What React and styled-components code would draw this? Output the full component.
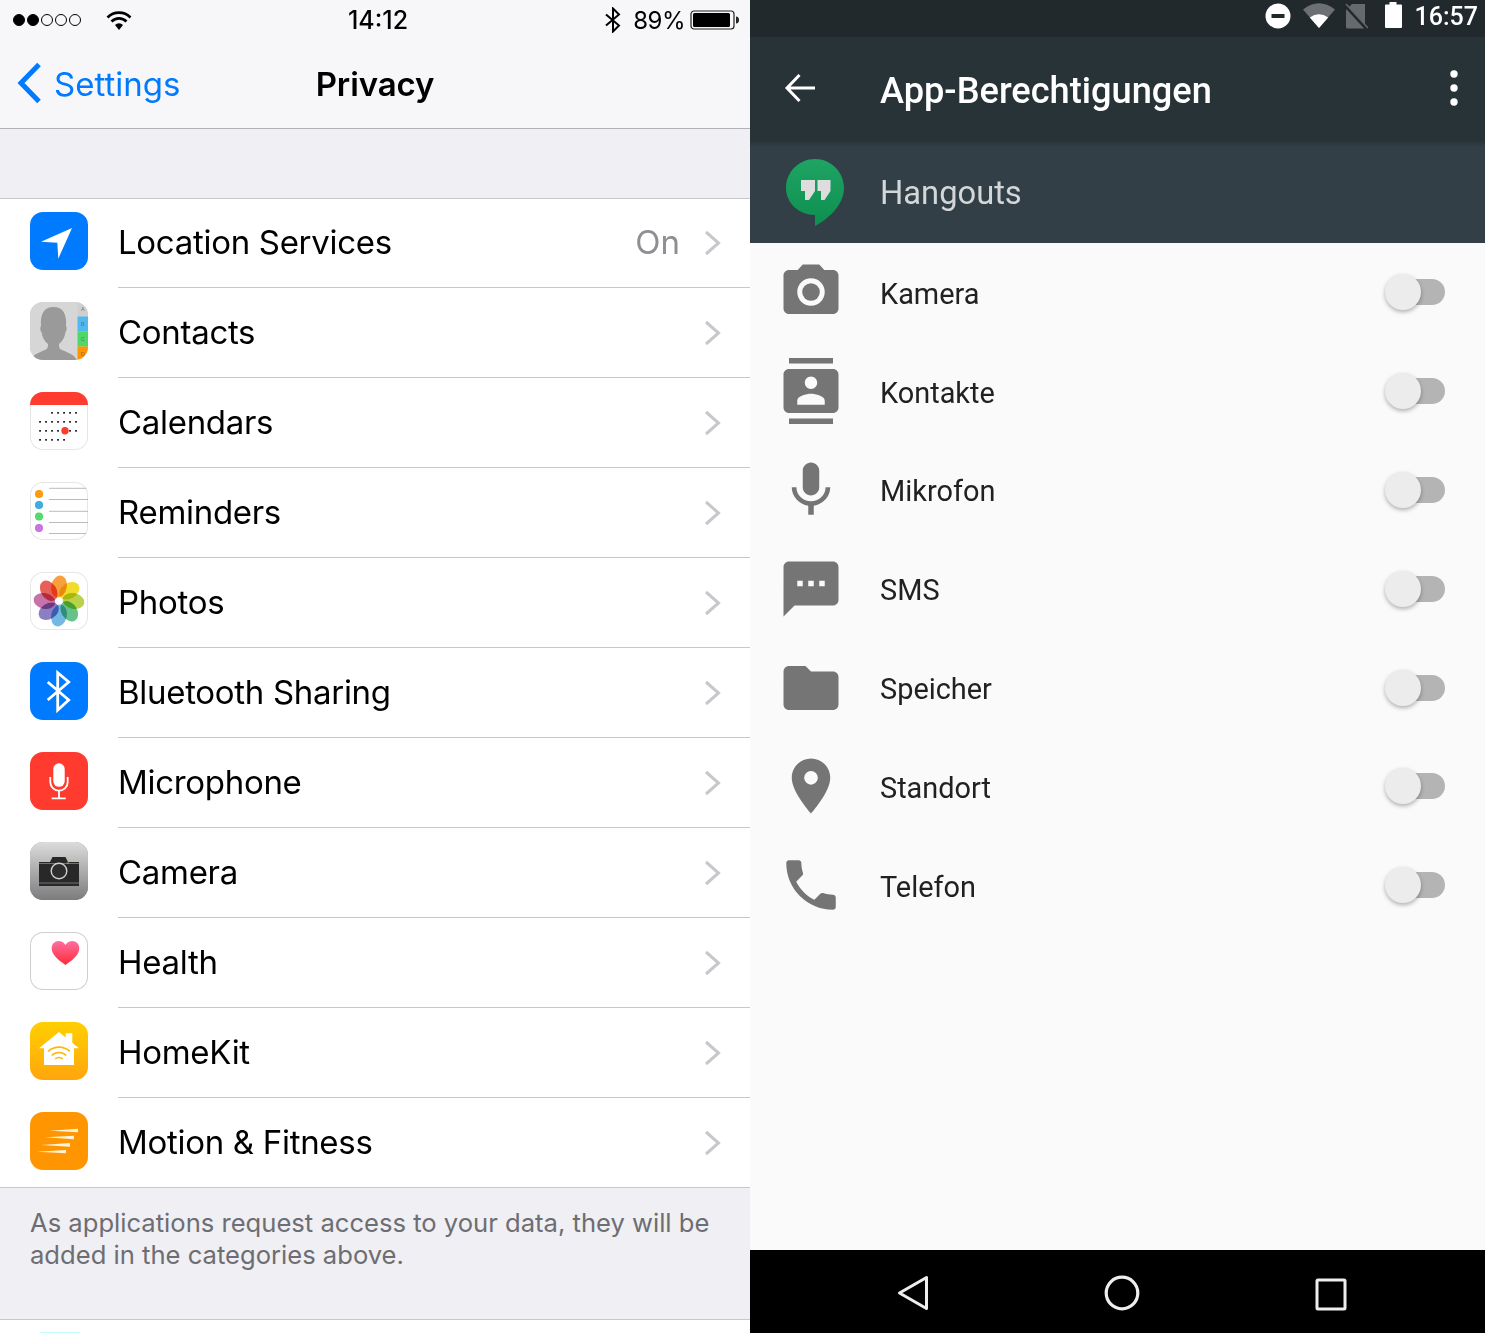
import styled, { createGlobalStyle } from "styled-components";
import { MdPhotoCamera, MdContacts, MdMic, MdSms, MdFolder, MdLocationOn, MdPhone } from "react-icons/md";

const Global = createGlobalStyle`
    html, body { margin: 0; padding: 0; background: #fff; }
    * { box-sizing: border-box; }
`;

const Screen = styled.div`
    display: grid;
    grid-template-columns: 750px 735px;
    grid-template-rows: 1333px;
    width: 1485px;
    height: 1333px;
    overflow: hidden;
`;

/* ---------- iOS side ---------- */

const Ios = styled.section`
    display: flex;
    flex-direction: column;
    min-height: 0;
    overflow: hidden;
    background: #fff;
    color: #000;
    font-family: Inter, "Liberation Sans", sans-serif;
`;

const IosHead = styled.header`
    flex: none;
    height: 129px;
    background: #f7f7f9;
    border-bottom: 1px solid #b2b2b6;
`;

const IosStatus = styled.div`
    display: grid;
    grid-template-columns: 1fr auto 1fr;
    align-items: center;
    height: 40px;
    padding: 0 10px 0 13px;
    font-size: 25px;
    font-weight: 500;
`;

const StatusSide = styled.div`
    display: flex;
    align-items: center;
    justify-content: ${(p) => (p.$end ? "flex-end" : "flex-start")};
    gap: ${(p) => p.$gap || 0}px;
`;

const Clock = styled.span`
    padding-left: 3px;
`;

const Dots = styled.div`
    display: flex;
    gap: 2px;
    margin-right: 25px;
`;

const Dot = styled.span`
    width: 12px;
    height: 12px;
    border-radius: 50%;
    border: 1px solid #000;
    background: ${(p) => (p.$on ? "#000" : "transparent")};
`;

const Percent = styled.span`
    font-size: 24px;
    font-weight: 400;
    letter-spacing: -0.5px;
    margin-left: 6px;
`;

const IosNav = styled.div`
    display: grid;
    grid-template-columns: 1fr auto 1fr;
    align-items: center;
    height: 88px;
    padding: 0 17px;
`;

const Back = styled.div`
    display: flex;
    align-items: center;
    gap: 12px;
    color: #007aff;
    font-size: 33px;
    svg { flex: none; margin-bottom: 2px; }
`;

const NavTitle = styled.div`
    font-size: 33px;
    font-weight: 600;
    letter-spacing: -0.1px;
`;

const Gap = styled.div`
    flex: none;
    height: 69px;
    background: #efeff4;
`;

const List = styled.div`
    flex: none;
    border-top: 1px solid #c8c7cc;
`;

const Row = styled.div`
    display: flex;
    height: 90px;
    &:first-child { height: 89px; }
    &:last-child { height: 89px; }
`;

const Tile = styled.div`
    flex: none;
    width: 58px;
    height: 58px;
    margin: 14px 30px 0;
    border-radius: 13px;
    overflow: hidden;
    background: ${(p) => p.$bg};
    box-shadow: ${(p) => (p.$edge ? `inset 0 0 0 1px ${p.$edge}` : "none")};
    ${Row}:first-child & { margin-top: 13px; }
    svg { display: block; }
`;

const RowBody = styled.div`
    flex: 1;
    display: flex;
    align-items: center;
    padding-right: 29px;
    border-bottom: 1px solid #c8c7cc;
    ${Row}:last-child & { border-bottom: 0; }
`;

const RowLabel = styled.span`
    flex: 1;
    padding-bottom: 2px;
    font-size: 33px;
    letter-spacing: -0.3px;
`;

const RowValue = styled.span`
    padding-bottom: 2px;
    font-size: 33px;
    color: #8e8e93;
    margin-right: 24px;
`;

const Note = styled.footer`
    flex: none;
    height: 133px;
    padding: 19px 30px 0;
    background: #efeff4;
    border-top: 1px solid #c8c7cc;
    border-bottom: 1px solid #c8c7cc;
    color: #6d6d72;
    font-size: 25.600px;
    line-height: 32px;
    white-space: nowrap;
`;

const NextTile = styled.div`
    flex: none;
    width: 40px;
    height: 2px;
    margin: 12px 0 0 40px;
    background: #c4fbfb;
`;

/* iOS tile drawings, all on a 58 unit square */

const T = ({ children, defs }) => (
    <svg width="58" height="58" viewBox="0 0 58 58">
        {defs && <defs>{defs}</defs>}
        {children}
    </svg>
);

const LocationArt = () => (
    <T><polygon points="11,29.7 42,16 28.3,46.7 27.3,30.7" fill="#fff" /></T>
);

const ContactsArt = () => (
    <T>
        <path d="M0 58V0h47.5v58z" fill="#d6d6d6" />
        <path d="M1 58C2 53 8 51 15 48C18 47 18 44 18 42C14 39 12 34 11.500 30C10 29 10 25 11 24C10 12 14 5 23.500 5C33 5 37 12 36 24C37 25 37 29 35.500 30C35 34 33 39 29 42C29 44 29 47 32 48C39 51 45 53 46.500 58z" fill="#9a9a9a" />
        <rect x="47.500" width="11" height="14.500" fill="#cfcfcf" />
        <rect x="47.500" y="14.500" width="11" height="15" fill="#4fb9f0" />
        <rect x="47.500" y="29.500" width="11" height="15" fill="#4cd964" />
        <rect x="47.500" y="44.500" width="11" height="14" fill="#ff9500" />
        {["A", "B", "C", "D"].map((l, i) => (
            <text key={l} x="52.800" y={9 + i * 15} fontSize="5.500" textAnchor="middle" fill="#6f6f6f" fontFamily="Liberation Sans">{l}</text>
        ))}
    </T>
);

const calendarRows = [
    [22, 28, 34, 40, 46],
    [10, 16, 22, 28, 34, 40, 46],
    [10, 16, 22, 28, 40, 46],
    [10, 16, 22, 28, 34],
];

const CalendarArt = () => (
    <T>
        <rect x="0" y="0" width="58" height="13" fill="#ff3b30" />
        {calendarRows.map((xs, r) => xs.map((x) => (
            <rect key={`${r}-${x}`} x={x - 0.8} y={20 + r * 9} width="1.700" height="1.700" fill="#111" />
        )))}
        <circle cx="35" cy="38.700" r="3.700" fill="#ff3b30" />
    </T>
);

const reminderDots = [["#ff9500", 12], ["#34aadc", 23], ["#4cd964", 34.5], ["#c86edf", 46]];

const RemindersArt = () => (
    <T>
        {[6.3, 17.5, 29.3, 40.5, 51.5].map((y) => (
            <line key={y} x1="19" x2="58" y1={y} y2={y} stroke="#a9a9a9" strokeWidth="0.800" />
        ))}
        {reminderDots.map(([c, y]) => (
            <g key={y}>
                <circle cx="9" cy={y} r="4" fill={c} />
                <circle cx="9" cy={y} r="2" fill={c} stroke="#fff" strokeOpacity="0.250" strokeWidth="0.500" />
            </g>
        ))}
    </T>
);

const petals = ["#f9a03c", "#efdc2b", "#b8d24a", "#66c28a", "#73b9e3", "#8a7fc2", "#c573a8", "#e85f5a"];

const PhotosArt = () => (
    <T>
        <g style={{ isolation: "isolate" }}>
            {petals.map((c, i) => (
                <ellipse
                    key={c}
                    cx="29"
                    cy="14.500"
                    rx="7.800"
                    ry="11"
                    fill={c}
                    transform={`rotate(${i * 45} 29 29) rotate(${12} 29 14.500)`}
                    style={{ mixBlendMode: "multiply" }}
                />
            ))}
        </g>
        <circle cx="29" cy="29" r="1.300" fill="#fff" />
    </T>
);

const BluetoothArt = () => (
    <T>
        <path d="M17.700 20L38.700 38L27.700 48V10.700L38.700 20L17.700 38" fill="none" stroke="#fff" strokeWidth="2.800" />
    </T>
);

const MicArt = () => (
    <T>
        <rect x="23.300" y="11.300" width="11.400" height="23.500" rx="5.700" fill="#fff" />
        <path d="M20.300 25v5a8.700 8.700 0 0 0 17.400 0v-5" fill="none" stroke="#fff" strokeWidth="1.800" />
        <path d="M29 38.500V46M21.700 46.300h14" fill="none" stroke="#fff" strokeWidth="1.800" />
    </T>
);

const CameraArt = () => (
    <T defs={
        <linearGradient id="camBg" x1="0" x2="0" y1="0" y2="1">
            <stop offset="0" stopColor="#dcdcdc" />
            <stop offset="1" stopColor="#7c7c7e" />
        </linearGradient>
    }>
        <rect width="58" height="58" fill="url(#camBg)" />
        <path d="M9 20h11l2.500-5h13l2.500 5h11v24H9z" fill="#282828" />
        <path d="M9 21.500h40M9 41h40" stroke="#bcbcbc" strokeWidth="0.500" />
        <circle cx="29" cy="29" r="7.800" fill="#2d2d2d" stroke="#d0d0d0" strokeWidth="1.400" />
        <circle cx="38" cy="21" r="0.800" fill="#e0b040" />
    </T>
);

const HealthArt = () => (
    <T defs={
        <linearGradient id="heart" x1="0" x2="0" y1="0" y2="1">
            <stop offset="0" stopColor="#ff70a0" />
            <stop offset="1" stopColor="#ff2a3a" />
        </linearGradient>
    }>
        <path d="M35.500 33C26 26.500 21.700 22 21.700 16.300 21.700 12 25 9 28.500 9c3 0 5.500 1.500 7 4 1.500-2.500 4-4 7-4 3.500 0 6.800 3 6.800 7.300C49.300 22 45 26.500 35.500 33z" fill="url(#heart)" />
    </T>
);

const HomeArt = () => (
    <T>
        <path d="M9 26.300L29 10l6.700 5.400V11.300h6.600v9.500L49 26.300H44V43H14V26.300z" fill="#fff" />
        <path d="M18 29.500a16 16 0 0 1 22 0M21.700 33.500a10.500 10.500 0 0 1 14.600 0M25.200 37a5.400 5.400 0 0 1 7.600 0" fill="none" stroke="#ffb80a" strokeWidth="1.600" />
    </T>
);

const MotionArt = () => (
    <T>
        <polygon points="19.300,18.700 48,16.700 48,20.300" fill="#fff3d8" />
        <polygon points="15,25.300 44,23.700 44,27.300" fill="#fff3d8" />
        <polygon points="11,33 40,31 40,34.700" fill="#fff3d8" />
        <polygon points="6.700,39.700 36,38 36,41.300" fill="#fff3d8" />
    </T>
);

const iosRows = [
    { label: "Location Services", value: "On", bg: "#007aff", art: <LocationArt /> },
    { label: "Contacts", bg: "#d6d6d6", art: <ContactsArt /> },
    { label: "Calendars", bg: "#fff", edge: "#e6e6e6", art: <CalendarArt /> },
    { label: "Reminders", bg: "#fff", edge: "#e6e6e6", art: <RemindersArt /> },
    { label: "Photos", bg: "#fff", edge: "#e6e6e6", art: <PhotosArt /> },
    { label: "Bluetooth Sharing", bg: "#007aff", art: <BluetoothArt /> },
    { label: "Microphone", bg: "#ff3b30", art: <MicArt /> },
    { label: "Camera", bg: "#999", art: <CameraArt /> },
    { label: "Health", bg: "#fff", edge: "#cfcfd2", art: <HealthArt /> },
    { label: "HomeKit", bg: "linear-gradient(#ffcf00, #ffa60d)", art: <HomeArt /> },
    { label: "Motion & Fitness", bg: "#ff9500", art: <MotionArt /> },
];

const Chevron = () => (
    <svg width="17" height="26" viewBox="0 0 17 26">
        <path d="M2 2l12.500 11L2 24" fill="none" stroke="#c7c7cc" strokeWidth="3" />
    </svg>
);

/* ---------- Android side ---------- */

const Droid = styled.section`
    display: flex;
    flex-direction: column;
    min-height: 0;
    background: #fafafa;
    font-family: Roboto, "Liberation Sans", sans-serif;
`;

const DroidStatus = styled.div`
    display: flex;
    align-items: flex-start;
    justify-content: flex-end;
    flex: none;
    height: 37px;
    padding: 2px 7px 0 0;
    background: #22292d;
    color: #fff;
    font-size: 25px;
    font-weight: 500;
    line-height: 28px;
    svg { display: block; flex: none; }
`;

const StatusTime = styled.span`
    padding-top: 1px;
`;

const StatusIcon = styled.span`
    margin-right: ${(p) => p.$gap}px;
    margin-top: ${(p) => p.$top || 0}px;
`;

const Toolbar = styled.div`
    position: relative;
    display: flex;
    align-items: center;
    flex: none;
    height: 104px;
    padding: 0 26px 2px 34px;
    background: #283338;
    color: #fff;
    z-index: 1;
    &::after {
        content: "";
        position: absolute;
        left: 0;
        right: 0;
        top: 100%;
        height: 6px;
        background: linear-gradient(rgba(34, 43, 48, 0.6), rgba(34, 43, 48, 0));
    }
`;

const ToolbarTitle = styled.h1`
    flex: 1;
    margin: 5px 0 0 64px;
    font-size: 36.200px;
    font-weight: 500;
`;

const AppBand = styled.div`
    display: flex;
    align-items: center;
    flex: none;
    height: 102px;
    padding: 0 0 0 36px;
    background: #323f47;
`;

const AppName = styled.span`
    margin-left: 36px;
    padding-top: 2px;
    color: #d4d7d9;
    font-size: 32.700px;
`;

const Perms = styled.div`
    flex: 1;
`;

const Perm = styled.div`
    display: flex;
    align-items: center;
    height: 98.800px;
    padding: 0 40px 0 28px;
`;

const PermIcon = styled.span`
    flex: none;
    display: flex;
    width: 102px;
    color: #757575;
`;

const PermLabel = styled.span`
    flex: 1;
    color: #212121;
    font-size: 28.900px;
    padding-top: 3px;
`;

const Toggle = styled.span`
    position: relative;
    display: block;
    width: 60px;
    height: 36px;
    &::before {
        content: "";
        position: absolute;
        left: 7px;
        right: 0;
        top: 5px;
        height: 26px;
        border-radius: 13px;
        background: #b4b4b4;
    }
    &::after {
        content: "";
        position: absolute;
        left: 0;
        top: 0;
        width: 36px;
        height: 36px;
        border-radius: 50%;
        background: #ececec;
        box-shadow: 0 2px 4px rgba(0, 0, 0, 0.3);
    }
`;

const BottomBar = styled.nav`
    display: flex;
    align-items: flex-start;
    flex: none;
    height: 83px;
    padding: 25px 0 0 147px;
    background: #000;
    svg { display: block; flex: none; }
`;

const BarKey = styled.span`
    margin-right: ${(p) => p.$gap}px;
`;

const HangoutsLogo = () => (
    <svg width="58" height="67" viewBox="0 0 58 67">
        <defs>
            <linearGradient id="hang" x1="0" x2="0" y1="0" y2="1">
                <stop offset="0" stopColor="#1fa463" />
                <stop offset="1" stopColor="#0d8f4f" />
            </linearGradient>
        </defs>
        <path d="M29 0C13 0 0 13 0 29C0 44 13 56 29 56V67C44 59 58 45 58 29C58 13 45 0 29 0z" fill="url(#hang)" />
        <path d="M15 21h14v11l-6 9h-4v-9h-4zM31.500 21h13v11l-6 9h-3.500v-9h-3.500z" fill="#dddddd" />
    </svg>
);

const perms = [
    { label: "Kamera", Icon: MdPhotoCamera },
    { label: "Kontakte", Icon: MdContacts },
    { label: "Mikrofon", Icon: MdMic },
    { label: "SMS", Icon: MdSms },
    { label: "Speicher", Icon: MdFolder },
    { label: "Standort", Icon: MdLocationOn },
    { label: "Telefon", Icon: MdPhone },
];

export default function App() {
    return (
        <Screen>
            <Global />
            <Ios>
                <IosHead>
                    <IosStatus>
                        <StatusSide>
                            <Dots>
                                {[1, 1, 0, 0, 0].map((on, i) => <Dot key={i} $on={on} />)}
                            </Dots>
                            <svg width="26" height="20" viewBox="0 0 26 20">
                                <path d="M1.500 7.500a16 16 0 0 1 23 0M5.500 11.500a10.500 10.500 0 0 1 15 0" fill="none" stroke="#000" strokeWidth="2.600" />
                                <path d="M9 15a5.500 5.500 0 0 1 8 0l-4 5z" fill="#000" />
                            </svg>
                        </StatusSide>
                        <Clock>14:12</Clock>
                        <StatusSide $end $gap={5}>
                            <svg width="18" height="26" viewBox="0 0 18 26">
                                <path d="M2 7.500L15 18.500L9 24.500V1.500L15 7.500L2 18.500" fill="none" stroke="#000" strokeWidth="2" />
                            </svg>
                            <Percent>89%</Percent>
                            <svg width="50" height="20" viewBox="0 0 50 20">
                                <rect x="1" y="1" width="43" height="18" rx="3" fill="none" stroke="#222" strokeWidth="1.200" />
                                <rect x="3" y="3" width="37" height="14" rx="1.500" fill="#000" />
                                <path d="M46 6.500c2 0 3 1.500 3 3.500s-1 3.500-3 3.500z" fill="#222" />
                            </svg>
                        </StatusSide>
                    </IosStatus>
                    <IosNav>
                        <Back>
                            <svg width="25" height="42" viewBox="0 0 25 42">
                                <path d="M22 2.500L4 21l18 18.500" fill="none" stroke="#007aff" strokeWidth="5" />
                            </svg>
                            Settings
                        </Back>
                        <NavTitle>Privacy</NavTitle>
                    </IosNav>
                </IosHead>
                <Gap />
                <List>
                    {iosRows.map((r) => (
                        <Row key={r.label}>
                            <Tile $bg={r.bg} $edge={r.edge}>{r.art}</Tile>
                            <RowBody>
                                <RowLabel>{r.label}</RowLabel>
                                {r.value && <RowValue>{r.value}</RowValue>}
                                <Chevron />
                            </RowBody>
                        </Row>
                    ))}
                </List>
                <Note>
                    As applications request access to your data, they will be<br />
                    added in the categories above.
                </Note>
                <NextTile />
            </Ios>
            <Droid>
                <DroidStatus>
                    <StatusIcon $gap={12} $top={1}>
                        <svg width="26" height="26" viewBox="0 0 26 26">
                            <circle cx="13" cy="13" r="12.500" fill="#fff" />
                            <rect x="6.500" y="11" width="13" height="4" fill="#22292d" />
                        </svg>
                    </StatusIcon>
                    <StatusIcon $gap={9}>
                        <svg width="32" height="26" viewBox="0 0 32 26">
                            <path d="M0 7.500Q16-5 32 7.500L16 26z" fill="#6c7073" />
                            <path d="M6.800 15.500Q16 9 25.200 15.500L16 26z" fill="#fff" />
                        </svg>
                    </StatusIcon>
                    <StatusIcon $gap={16} $top={2}>
                        <svg width="24" height="25" viewBox="0 0 24 25">
                            <path d="M8 0h13v23a1.500 1.500 0 0 1-1.500 1.500h-16A1.500 1.500 0 0 1 2 23V6z" fill="#646a6e" />
                            <path d="M1 1l21 23" stroke="#22292d" strokeWidth="3.500" />
                            <path d="M2 0l22 24" stroke="#646a6e" strokeWidth="1.500" />
                        </svg>
                    </StatusIcon>
                    <StatusIcon $gap={12}>
                        <svg width="19" height="26" viewBox="0 0 19 26">
                            <path d="M5.500 0h7v2.500H17a1 1 0 0 1 1 1V25a1 1 0 0 1-1 1H2a1 1 0 0 1-1-1V3.500a1 1 0 0 1 1-1h3.500z" fill="#fff" />
                        </svg>
                    </StatusIcon>
                    <StatusTime>16:57</StatusTime>
                </DroidStatus>
                <Toolbar>
                    <svg width="32" height="30" viewBox="0 0 32 30">
                        <path d="M31 15H3M15.500 2L3 15l12.500 13" fill="none" stroke="#fff" strokeWidth="3" />
                    </svg>
                    <ToolbarTitle>App-Berechtigungen</ToolbarTitle>
                    <svg width="10" height="36" viewBox="0 0 10 36">
                        <circle cx="5" cy="4" r="3.700" fill="#fff" />
                        <circle cx="5" cy="18" r="3.700" fill="#fff" />
                        <circle cx="5" cy="32" r="3.700" fill="#fff" />
                    </svg>
                </Toolbar>
                <AppBand>
                    <HangoutsLogo />
                    <AppName>Hangouts</AppName>
                </AppBand>
                <Perms>
                    {perms.map(({ label, Icon }) => (
                        <Perm key={label}>
                            <PermIcon><Icon size={66} /></PermIcon>
                            <PermLabel>{label}</PermLabel>
                            <Toggle />
                        </Perm>
                    ))}
                </Perms>
                <BottomBar>
                    <BarKey $gap={175}>
                        <svg width="32" height="36" viewBox="0 0 32 36">
                            <path d="M29.500 2.500V33.500L2.500 18z" fill="none" stroke="#eee" strokeWidth="3" strokeLinejoin="round" />
                        </svg>
                    </BarKey>
                    <BarKey $gap={175}>
                        <svg width="36" height="36" viewBox="0 0 36 36">
                            <circle cx="18" cy="18" r="15.800" fill="none" stroke="#eee" strokeWidth="3.200" />
                        </svg>
                    </BarKey>
                    <BarKey $gap={0}>
                        <svg width="32" height="36" viewBox="0 0 32 36">
                            <rect x="2" y="5" width="28" height="29" rx="1" fill="none" stroke="#eee" strokeWidth="3" />
                        </svg>
                    </BarKey>
                </BottomBar>
            </Droid>
        </Screen>
    );
}
